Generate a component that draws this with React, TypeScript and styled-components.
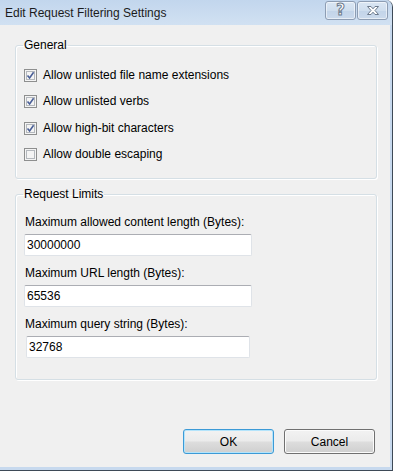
import styled, { createGlobalStyle } from "styled-components";

const GlobalStyle = createGlobalStyle`
    html, body {
        margin: 0;
        padding: 0;
        background: #fff;
    }
    body {
        font-family: "Liberation Sans", Arial, sans-serif;
        font-size: 12px;
        color: #000;
    }
`

const Frame = styled.div`
    width: 393px;
    height: 471px;
    box-sizing: border-box;
    display: flex;
    flex-direction: column;
    background: #c7d9ee;
    border-right: 1px solid #3e4a57;
    border-bottom: 1px solid #3e4a57;
    border-top-right-radius: 7px;
    padding: 0 2px 3px 0;
`

const TitleBar = styled.div`
    height: 25px;
    flex: none;
    display: flex;
    align-items: flex-start;
    background: linear-gradient(#c2d6ed, #d1e1f2);
    margin-right: -2px;
    border-top-right-radius: 7px;
    padding-right: 4px;
`

const Title = styled.span`
    padding: 6px 0 0 5px;
    line-height: 15px;
    font-size: 12px;
    color: #1b1b1b;
`

const CaptionButtons = styled.div`
    margin-left: auto;
    margin-top: 1px;
    display: flex;
    gap: 1px;
`

const CaptionButton = styled.div`
    width: 31px;
    height: 19px;
    box-sizing: border-box;
    border: 1px solid #8d9db3;
    border-radius: 3px;
    box-shadow: inset 0 0 0 1px rgba(255, 255, 255, 0.55);
    background: linear-gradient(#dae6f3 0%, #cfdeee 50%, #c2d4e9 51%, #cbdaec 100%);
    display: flex;
    align-items: center;
    justify-content: center;
    font-family: "DejaVu Sans", sans-serif;
    font-weight: bold;
    font-size: 15px;
    line-height: 15px;
    color: #fff;
    -webkit-text-stroke: 1px #6c7a8c;
`

const Client = styled.div`
    flex: 1;
    display: flex;
    flex-direction: column;
    background: #f0f0f0;
    padding: 13px 13px 13px 15px;
`

const Group = styled.fieldset<{ $pad: string }>`
    margin: 0;
    min-width: 0;
    padding: ${p => p.$pad};
    border: 1px solid #d5dfe5;
    border-radius: 3px;
    box-shadow: inset 1px 1px 0 #fff, 1px 1px 0 #fff;

    & + & {
        margin-top: 8px;
    }
`

const Legend = styled.legend`
    padding: 0 1px;
    margin-left: -1px;
    line-height: 15px;
    font-size: 12px;
    color: #000;
`

const CheckRow = styled.label`
    height: 26.5px;
    display: flex;
    align-items: center;
    gap: 6px;
    line-height: 15px;
`

const Box = styled.span`
    width: 13px;
    height: 13px;
    box-sizing: border-box;
    border: 1px solid #8e8f8f;
    background: #f4f4f4;
    box-shadow: inset 0 0 0 1px #f4f4f4, inset 0 0 0 2px #b4b8bd;
    position: relative;
    flex: none;

    & svg {
        position: absolute;
        left: 1px;
        top: 1px;
    }
`

const Field = styled.div`
    display: flex;
    flex-direction: column;

    & + & {
        margin-top: 10px;
    }
`

const FieldLabel = styled.div`
    line-height: 15px;
    margin-left: 1px;
    margin-bottom: 4px;
`

const TextBox = styled.input<{ $inset?: boolean }>`
    width: ${p => (p.$inset ? "224px" : "228px")};
    margin-left: ${p => (p.$inset ? "2px" : "0")};
    height: 22px;
    box-sizing: border-box;
    border: 1px solid #dfe3e8;
    border-top-color: #abadb3;
    border-radius: 2px;
    background: #fff;
    padding: 0 2px;
    font-family: "Liberation Sans", Arial, sans-serif;
    font-size: 12px;
    color: #000;
    outline: none;
`

const ButtonRow = styled.div`
    margin-top: auto;
    display: flex;
    justify-content: flex-end;
    gap: 10px;
    padding-right: 2px;
`

const Button = styled.button<{ $default?: boolean }>`
    width: 91px;
    height: 25px;
    box-sizing: border-box;
    border: 1px solid ${p => (p.$default ? "#3c9ad6" : "#707070")};
    border-radius: 3px;
    box-shadow: inset 0 0 0 1px ${p => (p.$default ? "#b4e4fb" : "#fbfbfb")};
    background: linear-gradient(#f2f2f2 0%, #ebebeb 48%, #dddddd 52%, #cfcfcf 100%);
    font-family: "Liberation Sans", Arial, sans-serif;
    font-size: 12px;
    color: #000;
    padding: 0;
`

const CheckMark = () => (
    <svg width="9" height="9" viewBox="0 0 9 9">
        <path d="M1.5 4.5 L3.6 7 L7.6 1.2" fill="none" stroke="#4a5f97" strokeWidth="1.6" />
    </svg>
)

const CloseGlyph = () => (
    <svg width="16" height="11" viewBox="0 0 16 11">
        <path
            d="M2.5 1.5 H6 L8 3.8 L10 1.5 H13.5 L10 5.5 L13.5 9.5 H10 L8 7.2 L6 9.5 H2.5 L6 5.5 Z"
            fill="#fff"
            stroke="#6c7a8c"
            strokeWidth="1"
            strokeLinejoin="round"
        />
    </svg>
)

const options = [
    { label: "Allow unlisted file name extensions", checked: true },
    { label: "Allow unlisted verbs", checked: true },
    { label: "Allow high-bit characters", checked: true },
    { label: "Allow double escaping", checked: false },
]

const limits = [
    { label: "Maximum allowed content length (Bytes):", value: "30000000" },
    { label: "Maximum URL length (Bytes):", value: "65536" },
    { label: "Maximum query string (Bytes):", value: "32768", inset: true },
]

const App = (): JSX.Element => {
    return (
        <>
            <GlobalStyle />
            <Frame>
                <TitleBar>
                    <Title>Edit Request Filtering Settings</Title>
                    <CaptionButtons>
                        <CaptionButton>?</CaptionButton>
                        <CaptionButton><CloseGlyph /></CaptionButton>
                    </CaptionButtons>
                </TitleBar>
                <Client>
                    <Group $pad="9px 8px 10px 8px">
                        <Legend>General</Legend>
                        {options.map(o => (
                            <CheckRow key={o.label}>
                                <Box>{o.checked && <CheckMark />}</Box>
                                {o.label}
                            </CheckRow>
                        ))}
                    </Group>
                    <Group $pad="13px 8px 21px 8px">
                        <Legend>Request Limits</Legend>
                        {limits.map(l => (
                            <Field key={l.label}>
                                <FieldLabel>{l.label}</FieldLabel>
                                <TextBox defaultValue={l.value} $inset={l.inset} readOnly />
                            </Field>
                        ))}
                    </Group>
                    <ButtonRow>
                        <Button $default>OK</Button>
                        <Button>Cancel</Button>
                    </ButtonRow>
                </Client>
            </Frame>
        </>
    );
}

export default App;
